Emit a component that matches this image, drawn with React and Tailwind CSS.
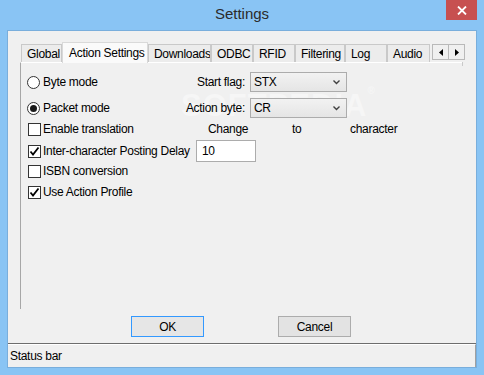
import React from "react";

const font = { fontFamily: '"Liberation Sans", Arial, sans-serif' };

function Radio({ checked }) {
  return (
    <span className="relative flex h-[13px] w-[13px] shrink-0 items-center justify-center rounded-full border border-[#333333] bg-white">
      {checked && <span className="h-[7px] w-[7px] rounded-full bg-[#1a1a1a]" />}
    </span>
  );
}

function Check({ checked }) {
  return (
    <span className="flex h-[13px] w-[13px] shrink-0 items-center justify-center border border-[#333333] bg-white">
      {checked && (
        <svg width="11" height="11" viewBox="0 0 11 11">
          <path d="M1.5 5.5 L4 8.5 L9.5 1.5" fill="none" stroke="#000" strokeWidth="1.8" />
        </svg>
      )}
    </span>
  );
}

function Select({ value }) {
  return (
    <div className="flex h-[20px] w-[97px] items-center justify-between border border-[#acacac] bg-gradient-to-b from-[#f2f2f2] to-[#e5e5e5] pl-[3px] pr-[6px] text-[12px] text-black">
      <span>{value}</span>
      <svg width="7" height="5" viewBox="0 0 7 5">
        <path d="M0.5 0.5 L3.5 3.5 L6.5 0.5" fill="none" stroke="#404040" strokeWidth="1.4" />
      </svg>
    </div>
  );
}

const tabs = [
  { label: "Global", w: "w-[41px]" },
  { label: "Action Settings", w: "w-[86px]", active: true },
  { label: "Downloads", w: "w-[63px]" },
  { label: "ODBC", w: "w-[42px]" },
  { label: "RFID", w: "w-[42px]" },
  { label: "Filtering", w: "w-[50px]" },
  { label: "Log", w: "w-[42px]" },
  { label: "Audio", w: "w-[43px]" },
];

export default function App() {
  return (
    <div className="relative flex h-[375px] w-[484px] flex-col whitespace-nowrap bg-[#89c4f4] px-[7px] tracking-[-0.3px]" style={font}>
      {/* Title bar */}
      <div className="relative flex h-[30px] shrink-0 items-center justify-center">
        <span className="-mt-[1px] text-[15px] tracking-normal text-[#2b2b2b]">Settings</span>
        <div className="absolute right-[0px] top-0 flex h-[20px] w-[31px] items-center justify-center bg-[#c75050]">
          <svg width="10" height="9" viewBox="0 0 10 9">
            <path d="M1 0.5 L9 8.5 M9 0.5 L1 8.5" stroke="#fff" strokeWidth="1.8" />
          </svg>
        </div>
      </div>

      {/* Client */}
      <div className="flex h-[338px] flex-col border border-[#79aedc] bg-[#f0f0f0]">
        <div className="flex flex-col pl-[12px] pt-[11px]">
          {/* Tab strip */}
          <div className="flex h-[20px] items-end pl-[1px]">
            {tabs.map((t) =>
              t.active ? (
                <div
                  key={t.label}
                  className={`${t.w} relative z-10 -mb-[1px] flex h-[21px] shrink-0 items-start overflow-hidden border border-b-0 border-[#d9d9d9] bg-[#fafafa] pl-[6px] pt-[1px] text-[12px] text-black`}
                >
                  {t.label}
                </div>
              ) : (
                <div
                  key={t.label}
                  className={`${t.w} flex h-[18px] shrink-0 items-center overflow-hidden border border-b-0 border-[#c9c9c9] bg-[#ececec] pl-[5px] text-[12px] text-black`}
                >
                  {t.label}
                </div>
              )
            )}
            <div className="mb-[2px] ml-[2px] flex h-[16px]">
              <div className="flex h-[16px] w-[17px] items-center justify-center border border-[#b9b9b9] bg-[#f0f0f0]">
                <svg width="4" height="7" viewBox="0 0 4 7"><path d="M4 0 L0 3.5 L4 7 Z" fill="#000" /></svg>
              </div>
              <div className="-ml-[1px] flex h-[16px] w-[17px] items-center justify-center border border-[#b9b9b9] bg-[#f0f0f0]">
                <svg width="4" height="7" viewBox="0 0 4 7"><path d="M0 0 L4 3.5 L0 7 Z" fill="#000" /></svg>
              </div>
            </div>
          </div>

          {/* Panel */}
          <div className="relative flex h-[247px] w-[443px] flex-col border-l border-t border-l-[#a7a7a7] border-t-white text-[12px] text-black">
            <div className="absolute right-0 top-[-1px] h-[4px] w-[1px] bg-[#c9c9c9]" />
            <div className="pointer-events-none absolute left-[160px] top-[20px] select-none text-[31px] font-bold tracking-[1px] text-white opacity-40">
              SOFTPEDIA<span className="align-top text-[10px]">®</span>
            </div>

            {/* Row 1 */}
            <div className="mt-[9px] flex h-[20px] items-center">
              <div className="flex w-[150px] shrink-0 items-center gap-[3px] pl-[6px]">
                <Radio />
                <span>Byte mode</span>
              </div>
              <span className="w-[74px] shrink-0 text-right">Start flag:</span>
              <div className="relative z-10 ml-[5px]">
                <Select value="STX" />
              </div>
            </div>

            {/* Row 2 */}
            <div className="mt-[6px] flex h-[20px] items-center">
              <div className="flex w-[150px] shrink-0 items-center gap-[3px] pl-[6px]">
                <Radio checked />
                <span>Packet mode</span>
              </div>
              <span className="relative z-10 w-[74px] shrink-0 text-right">Action byte:</span>
              <div className="relative z-10 ml-[5px]">
                <Select value="CR" />
              </div>
            </div>

            {/* Row 3 */}
            <div className="mt-[3px] flex h-[16px] items-center">
              <div className="flex w-[187px] shrink-0 items-center gap-[2px] pl-[7px]">
                <Check />
                <span>Enable translation</span>
              </div>
              <span className="w-[84px] shrink-0">Change</span>
              <span className="w-[58px] shrink-0">to</span>
              <span>character</span>
            </div>

            {/* Row 4 */}
            <div className="mt-[3px] flex h-[22px] items-center">
              <div className="flex w-[175px] shrink-0 items-center gap-[2px] pl-[7px]">
                <Check checked />
                <span>Inter-character Posting Delay</span>
              </div>
              <div className="flex h-[22px] w-[60px] items-center border border-[#acacac] bg-white pl-[5px]">10</div>
            </div>

            {/* Row 5 */}
            <div className="mt-[1px] flex h-[16px] items-center gap-[2px] pl-[7px]">
              <Check />
              <span>ISBN conversion</span>
            </div>

            {/* Row 6 */}
            <div className="mt-[5px] flex h-[16px] items-center gap-[2px] pl-[7px]">
              <Check checked />
              <span>Use Action Profile</span>
            </div>
          </div>
        </div>

        {/* Buttons */}
        <div className="mt-[7px] flex h-[21px] pl-[123px] text-[12px] text-black">
          <div className="flex h-[21px] w-[73px] items-center justify-center border border-[#3399ff] bg-[#e6e6e6]">OK</div>
          <div className="ml-[74px] flex h-[21px] w-[73px] items-center justify-center border border-[#acacac] bg-[#e3e3e3]">Cancel</div>
        </div>

        {/* Status bar */}
        <div className="mt-[6px] h-[1px] bg-[#6d6d6d]" />
        <div className="flex h-[23px] items-center border-r border-t border-r-[#a0a0a0] border-t-white pl-[2px] text-[12px] text-black">
          Status bar
        </div>
      </div>
    </div>
  );
}
